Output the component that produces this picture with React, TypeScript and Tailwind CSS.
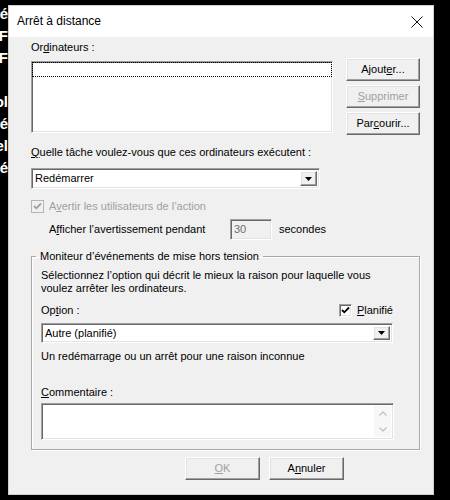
import type { ReactNode } from 'react';

const sunken =
  'border border-t-[#a0a0a0] border-l-[#a0a0a0] border-r-white border-b-white shadow-[inset_1px_1px_0_#696969,inset_-1px_-1px_0_#e3e3e3]';
const raised =
  'border border-t-white border-l-white border-r-[#696969] border-b-[#696969] shadow-[inset_-1px_-1px_0_#a0a0a0,inset_1px_1px_0_#e3e3e3]';

function Btn({ children, disabled, w }: { children: ReactNode; disabled?: boolean; w: string }) {
  return (
    <button
      className={`${raised} ${w} h-[23px] bg-[#f0f0f0] flex items-center justify-center text-[11px] leading-[13px] ${
        disabled ? 'text-[#a0a0a0]' : 'text-black'
      }`}
    >
      {children}
    </button>
  );
}

function Check({ disabled }: { disabled?: boolean }) {
  return (
    <div
      className={`w-[13px] h-[13px] shrink-0 flex items-center justify-center ${
        disabled ? 'border border-[#b4b4b4] bg-[#f0f0f0]' : `${sunken} bg-white`
      }`}
    >
      <svg width="9" height="9" viewBox="0 0 9 9">
        <path d="M1 4l2.3 2.3L8 1.5" fill="none" stroke={disabled ? '#a0a0a0' : '#000'} strokeWidth="1.8" />
      </svg>
    </div>
  );
}

function Combo({ value, w, h }: { value: string; w: string; h: string }) {
  return (
    <div className={`${sunken} ${w} ${h} bg-white flex items-center p-[2px]`}>
      <span className="flex-1 pl-[1px]">{value}</span>
      <div className={`${raised} w-[17px] h-full bg-[#f0f0f0] flex items-center justify-center`}>
        <svg width="7" height="4" viewBox="0 0 7 4">
          <path d="M0 0h7L3.5 4z" fill="#000" />
        </svg>
      </div>
    </div>
  );
}

export default function App() {
  return (
    <div className="w-[450px] h-[500px] bg-black flex overflow-hidden font-['Liberation_Sans',Arial,sans-serif] text-[11px] leading-[13px] text-black">
      {/* page behind the dialog */}
      <div className="w-[8px] shrink-0 overflow-hidden flex flex-col items-end text-white font-bold text-[15px] leading-[22px] pt-[3px]">
        <div className="whitespace-nowrap">té</div>
        <div className="whitespace-nowrap">F</div>
        <div className="whitespace-nowrap">F</div>
        <div className="whitespace-nowrap">&nbsp;</div>
        <div className="whitespace-nowrap">ol</div>
        <div className="whitespace-nowrap">é</div>
        <div className="whitespace-nowrap">el</div>
        <div className="whitespace-nowrap">é</div>
      </div>

      {/* dialog */}
      <div className="mt-[5px] w-[426px] h-[490px] border border-[#cfcfcf] bg-[#f0f0f0] flex flex-col">
        <div className="h-[31px] bg-white flex items-center justify-between pl-[8px] pr-[9px]">
          <span className="text-[12px]">Arrêt à distance</span>
          <svg width="12" height="12" viewBox="0 0 12 12" className="mr-[1px]">
            <path d="M0.5 0.5l11 11M11.5 0.5l-11 11" stroke="#111" strokeWidth="1" />
          </svg>
        </div>

        <div className="flex flex-col pl-[22px] pr-[13px]">
          <div className="mt-[4px]">
            Or<u>d</u>inateurs :
          </div>

          <div className="mt-[4px] flex">
            <div className={`${sunken} mt-[3px] w-[302px] h-[72px] bg-white`}>
              <div className="h-[15px] border border-dotted border-black" />
            </div>
            <div className="ml-[13px] flex flex-col gap-[4px]">
              <Btn w="w-[74px]">
                Ajout<u>e</u>r...
              </Btn>
              <Btn w="w-[74px]" disabled>
                <u>S</u>upprimer
              </Btn>
              <Btn w="w-[74px]">
                Par<u>c</u>ourir...
              </Btn>
            </div>
          </div>

          <div className="mt-[11px]">
            <u>Q</u>uelle tâche voulez-vous que ces ordinateurs exécutent :
          </div>
          <div className="mt-[9px]">
            <Combo value="Redémarrer" w="w-[289px]" h="h-[21px]" />
          </div>

          <div className="mt-[11px] flex items-center gap-[5px]">
            <Check disabled />
            <span className="text-[#a0a0a0]">
              A<u>v</u>ertir les utilisateurs de l’action
            </span>
          </div>

          <div className="mt-[6px] flex items-center pl-[18px]">
            <span className="w-[181px]">
              A<u>f</u>ficher l’avertissement pendant
            </span>
            <div className={`${sunken} w-[42px] h-[21px] bg-[#f0f0f0] flex items-center pl-[3px] text-[#6d6d6d]`}>
              30
            </div>
            <span className="ml-[7px]">secondes</span>
          </div>

          <fieldset className="mt-[10px] w-[389px] border border-[#a8a8a8] shadow-[1px_1px_0_#fff,inset_1px_1px_0_#fff] px-[9px] pb-[9px]">
            <legend className="-ml-[5px] px-[4px] leading-[13px]">
              Moniteur d’événements de mise hors tension
            </legend>
            <p className="mt-[6px]">
              Sélectionnez l’option qui décrit le mieux la raison pour laquelle vous
              <br />
              voulez arrêter les ordinateurs.
            </p>
            <div className="mt-[9px] w-[352px] flex items-center justify-between">
              <span>
                Op<u>t</u>ion :
              </span>
              <span className="flex items-center gap-[5px]">
                <Check />
                <span>
                  <u>P</u>lanifié
                </span>
              </span>
            </div>
            <div className="mt-[6px]">
              <Combo value="Autre (planifié)" w="w-[352px]" h="h-[20px]" />
            </div>
            <div className="mt-[7px]">Un redémarrage ou un arrêt pour une raison inconnue</div>
            <div className="mt-[23px]">
              <u>C</u>ommentaire :
            </div>
            <div className={`${sunken} mt-[4px] w-[353px] h-[37px] bg-white flex justify-end p-[2px]`}>
              <div className="w-[17px] h-full bg-[#f7f7f7] flex flex-col items-center justify-around">
                <svg width="8" height="5" viewBox="0 0 8 5">
                  <path d="M0.5 4.5L4 1l3.5 3.5" fill="none" stroke="#c2c2c2" strokeWidth="1.3" />
                </svg>
                <svg width="8" height="5" viewBox="0 0 8 5">
                  <path d="M0.5 0.5L4 4l3.5-3.5" fill="none" stroke="#c2c2c2" strokeWidth="1.3" />
                </svg>
              </div>
            </div>
          </fieldset>

          <div className="mt-[7px] ml-[154px] flex gap-[9px]">
            <Btn w="w-[75px]" disabled>
              <u>O</u>K
            </Btn>
            <Btn w="w-[75px]">
              A<u>n</u>nuler
            </Btn>
          </div>
        </div>
      </div>
    </div>
  );
}
